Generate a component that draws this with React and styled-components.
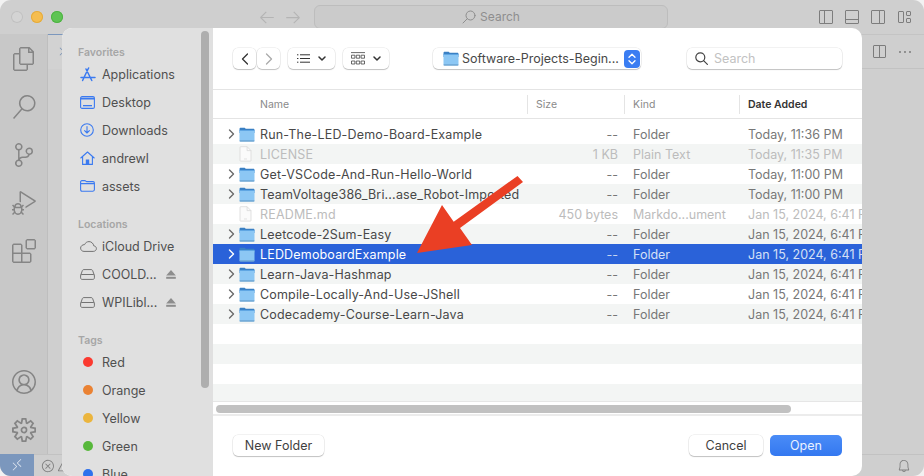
import React from "react";
import styled, { createGlobalStyle } from "styled-components";
import {
  VscFiles, VscSearch, VscSourceControl, VscDebugAlt, VscExtensions, VscAccount, VscSettingsGear,
  VscBell, VscRemote, VscError, VscWarning, VscSplitHorizontal, VscEllipsis, VscLayoutSidebarLeftOff,
  VscLayoutPanelOff, VscLayoutSidebarRightOff, VscLayout, VscArrowLeft, VscArrowRight, VscChevronRight,
} from "react-icons/vsc";

const Global = createGlobalStyle`
  html, body { margin: 0; padding: 0; background: #f2f2f2; overflow: hidden; }
  * { box-sizing: border-box; }
  body { font-family: Inter, "Liberation Sans", sans-serif; }
`;

const Page = styled.div`position: relative; width: 924px; height: 476px; overflow: hidden;`;
const Win = styled.div`
  width: 924px; height: 476px; border-radius: 11px; overflow: hidden; background: #cfcfcf;
  display: flex; flex-direction: column;
`;
const TitleBar = styled.div`height: 34px; display: flex; align-items: center; flex: none; padding-left: 11px; color: #a9a9a9;`;
const Light = styled.span`
  width: 12px; height: 12px; border-radius: 50%; margin-right: 8px; background: ${p => p.$c};
  box-shadow: inset 0 0 0 1px ${p => p.$b};
`;
const NavArrows = styled.div`display: flex; gap: 8px; margin-left: 187px; font-size: 18px; align-items: center; color: #b4b4b4;`;
const TitleSearch = styled.div`
  width: 354px; height: 24px; margin-left: 12px; margin-top: -1px; border: 1px solid #bdbdbd; border-radius: 6px; background: #cbcbcb;
  display: flex; align-items: center; justify-content: center; gap: 4px; color: #8e8e8e; font-size: 12px;
`;
const LayoutIcons = styled.div`display: flex; gap: 10px; margin-left: 150px; font-size: 16px; color: #7d7d7d; align-items: center;`;
const Body = styled.div`flex: 1; display: flex; min-height: 0;`;
const Activity = styled.div`
  width: 48px; background: #c8c8c8; border-right: 1px solid #bebebe; display: flex; flex-direction: column;
  align-items: center; padding-top: 1px; color: #858585; font-size: 24px;
`;
const ActivityItem = styled.div`height: 48px; width: 48px; display: flex; align-items: center; justify-content: center; flex: none;`;
const Spacer = styled.div`flex: 1;`;
const Editor = styled.div`flex: 1; display: flex; flex-direction: column;`;
const Tabs = styled.div`
  height: 35px; border-bottom: 1px solid #c2c2c2; border-top: 1px solid #c4c4c4; display: flex; align-items: center;
  gap: 10px; padding-right: 11px; color: #7c7c7c; font-size: 16px;
`;
const ActiveTab = styled.div`
  width: 20px; height: 35px; margin-top: -1px; margin-right: auto; border-top: 1px solid #7b97bd; background: #d2d2d2;
  display: flex; align-items: center; justify-content: flex-end; color: #7790b3; font-size: 13px;
`;
const Status = styled.div`height: 22px; flex: none; display: flex; align-items: center; border-top: 1px solid #c2c2c2; color: #808080; font-size: 14px;`;
const Remote = styled.div`width: 34px; height: 22px; margin-top: -1px; background: #7b97bd; color: #dfe6f0; display: flex; align-items: center; justify-content: center; font-size: 14px;`;
const StatusItems = styled.div`display: flex; gap: 2px; margin-left: 7px; flex: 1;`;
const BellWrap = styled.div`margin-right: 13px; display: flex;`;

const Dialog = styled.div`
  position: absolute; left: 62px; top: 28px; width: 800px; height: 448px; display: flex; background: #fff;
  border-radius: 10px; overflow: hidden;
`;
const Sidebar = styled.div`position: relative; width: 151px; flex: none; background: #e0e0e0; padding: 16px 0 0 16px; overflow: hidden;`;
const Scroll = styled.div`position: absolute; left: 139px; top: 3px; width: 8px; height: 357px; border-radius: 4px; background: #aeaeae;`;
const SideSection = styled.div`margin-bottom: 16px;`;
const SideTitle = styled.div`height: 16px; line-height: 18px; font-size: 10.5px; font-weight: 600; color: #a6a6a6;`;
const SideItem = styled.div`
  height: 28px; display: flex; align-items: center; font-size: 12.5px; color: #505050; white-space: nowrap;
`;
const SideIcon = styled.span`width: 24px; flex: none; display: flex; align-items: center; padding-left: 2px;`;
const Eject = styled.span`margin-left: 9px; display: flex;`;
const Dot = styled.span`width: 10px; height: 10px; border-radius: 50%; background: ${p => p.$c}; margin-left: 3px;`;

const Main = styled.div`flex: 1; min-width: 0; display: flex; flex-direction: column; overflow: hidden;`;
const Toolbar = styled.div`height: 62px; flex: none; display: flex; align-items: center; padding-left: 20px; border-bottom: 1px solid #e4e4e4;`;
const ToolBtn = styled.div`
  width: ${p => p.$w}px; height: 21px; margin-left: ${p => p.$ml || 0}px; border-radius: 5px; background: #fff; flex: none;
  box-shadow: 0 0 0 .5px rgba(0,0,0,.1), 0 1px 1px rgba(0,0,0,.2); display: flex; align-items: center; justify-content: center; gap: 8px;
  color: #333;
`;
const PathBtn = styled(ToolBtn)`justify-content: flex-start; padding: 0 1px 0 10px; gap: 3px; font-size: 12.5px; color: #484848; white-space: nowrap;`;
const Stepper = styled.span`margin-left: auto; width: 16px; height: 18px; border-radius: 4px; background: #3a7df2; display: flex; align-items: center; justify-content: center;`;
const SearchBox = styled(ToolBtn)`justify-content: flex-start; padding-left: 8px; gap: 6px; font-size: 12.5px; color: #c2c2c2;`;

const Header = styled.div`height: 29px; flex: none; border-bottom: 1px solid #e4e4e4; display: grid; grid-template-columns: 315px 97px 115px 122px; align-items: center; font-size: 10.5px; color: #8a8a8a;`;
const HeadCell = styled.div`
  height: 19px; line-height: 19px; padding-left: ${p => p.$first ? 47 : 8}px; border-right: ${p => p.$last ? "none" : "1px solid #e4e4e4"};
  font-weight: ${p => p.$active ? 600 : 400}; color: ${p => p.$active ? "#333" : "#8a8a8a"};
`;
const List = styled.div`flex: 1; min-height: 0; padding-top: 5px; overflow: hidden; border-bottom: 1px solid #e6e6e6;`;
const Row = styled.div`
  height: 20px; display: grid; grid-template-columns: 315px 97px 115px 140px; align-items: center; font-size: 12.5px; white-space: nowrap;
  background: ${p => p.$sel ? "#2a62d9" : p.$odd ? "#f3f5f4" : "#fff"};
  color: ${p => p.$sel ? "#fff" : p.$dim ? "#bcbcbc" : "#484848"};
`;
const NameCell = styled.div`display: flex; align-items: center; padding-left: 15px; letter-spacing: .17px;`;
const Chevron = styled.span`width: 11px; display: flex; flex: none;`;
const FileIc = styled.span`width: 21px; display: flex; flex: none;`;
const SizeCell = styled.div`text-align: right; padding-right: 7px; color: ${p => p.$sel ? "#c6d5f3" : p.$dim ? "#bcbcbc" : "#777"};`;
const MetaCell = styled.div`padding-left: 8px; color: ${p => p.$sel ? "#d5e0f6" : p.$dim ? "#bcbcbc" : "#777"};`;
const Track = styled.div`height: 14px; flex: none; padding: 3px 3px 0 3px; border-bottom: 2px solid #ececec;`;
const Thumb = styled.div`width: 575px; height: 8px; border-radius: 4px; background: #c1c1c1;`;
const Footer = styled.div`height: 60px; flex: none; display: flex; align-items: flex-start; padding: 19px 20px 0 20px; gap: 7px;`;
const FootBtn = styled.div`
  width: ${p => p.$w}px; height: 21px; margin-right: ${p => p.$push ? "auto" : 0}; border-radius: 5px; font-size: 12.5px; display: flex; align-items: center; justify-content: center;
  background: ${p => p.$primary ? "linear-gradient(#4a8cf7,#3478f0)" : "#fff"}; color: ${p => p.$primary ? "#e9f1ff" : "#3f3f3f"};
  box-shadow: ${p => p.$primary ? "none" : "0 0 0 .5px rgba(0,0,0,.1), 0 1px 1px rgba(0,0,0,.2)"};
`;
const Arrow = styled.svg`position: absolute; left: 0; top: 0; pointer-events: none;`;

const Folder = () => (
  <svg width="16" height="15" viewBox="0 0 16 15">
    <path d="M.5 2.2C.5 1.2 1 .8 1.9.8h3.4c.7 0 1 .7 1.6.9h7.3c.9 0 1.3.5 1.3 1.3v3H.5z" fill="#3a80c4" />
    <rect x=".5" y="3" width="15" height="11.5" rx="1.2" fill="#8cc7f4" />
    <path d="M.5 3.6c0-.4.3-.6.7-.6h13.6c.4 0 .7.2.7.6v.4H.5z" fill="#5fa6e3" />
    <rect x=".5" y="13.6" width="15" height=".9" rx=".4" fill="#5c93c2" />
  </svg>
);
const FileGlyph = () => (
  <svg width="13" height="16" viewBox="0 0 13 16" fill="#fbfbfb" stroke="#d9d9d9" strokeWidth=".8">
    <path d="M1 1.2c0-.3.2-.5.5-.5h6.6L12 4.6v10c0 .3-.2.5-.5.5h-10c-.3 0-.5-.2-.5-.5z" />
    <path d="M8.1.7v3.9H12" fill="none" />
    <path d="M5 13h3" strokeWidth=".7" />
  </svg>
);
const Chev = ({ color = "#6a6a6a" }) => (
  <svg width="7" height="10" viewBox="0 0 7 10" fill="none" stroke={color} strokeWidth="1.4" strokeLinecap="round" strokeLinejoin="round"><path d="M1.5 1l4 4-4 4" /></svg>
);
const B = "#3b7af0";
const AppIc = () => (<svg width="16" height="15" viewBox="0 0 16 15" fill="none" stroke={B} strokeWidth="1.5" strokeLinecap="round"><path d="M8.6 1 4 10.5 2.6 13.5M6 2l5.800 11.500M1 10.500h14" /></svg>);
const DeskIc = () => (<svg width="15" height="13" viewBox="0 0 15 13" fill="none" stroke={B} strokeWidth="1.1"><rect x=".6" y=".6" width="13.8" height="11.8" rx="1.5" /><path d="M1 2.2h13V3H1z" fill={B} /><rect x="3" y="9" width="9" height="1.3" fill={B} stroke="none" /></svg>);
const DownIc = () => (<svg width="14" height="14" viewBox="0 0 14 14" fill="none" stroke={B} strokeWidth="1.1" strokeLinecap="round" strokeLinejoin="round"><circle cx="7" cy="7" r="6.3" /><path d="M7 3.6v6.4M4.6 7.7 7 10l2.4-2.3" /></svg>);
const HomeIc = () => (<svg width="15" height="14" viewBox="0 0 15 14" fill="none" stroke={B} strokeWidth="1.1" strokeLinejoin="round" strokeLinecap="round"><path d="M.8 7 7.5 1l6.7 6M2.6 5.6v7.8h9.8V5.6" /><rect x="5.8" y="8.5" width="3.4" height="4.9" fill={B} stroke="none" /></svg>);
const OutFolder = () => (<svg width="15" height="12" viewBox="0 0 15 12" fill="none" stroke={B} strokeWidth="1.1"><path d="M.6 2c0-.8.5-1.4 1.3-1.4h3c.8 0 1 1 1.800 1H13c.9 0 1.400.5 1.400 1.300v6.700c0 1-.5 1.600-1.400 1.600H2c-.9 0-1.400-.6-1.400-1.600zM.6 3.600h13.800" /></svg>);
const Cloud = () => (<svg width="17" height="11" viewBox="0 0 17 11" fill="none" stroke="#737373" strokeWidth="1"><path d="M4 10.4h9.2c1.8 0 3.2-1.2 3.2-2.8 0-1.5-1.1-2.6-2.6-2.7C13.4 2.4 11.4.6 9 .6 7 .6 5.3 1.8 4.6 3.6 2.3 3.6.6 5.2.6 7.1c0 1.9 1.5 3.3 3.4 3.3z" /></svg>);
const Drive = () => (<svg width="15" height="11" viewBox="0 0 15 11" fill="none" stroke="#737373" strokeWidth="1"><path d="M.6 6.5 2.4 1.5C2.7.9 3.1.6 3.8.6h7.4c.7 0 1.1.3 1.4.9l1.8 5M.6 6.5v2.4c0 .9.6 1.500 1.500 1.500h10.800c.9 0 1.500-.6 1.500-1.500V6.500c0-.6-.5-1-1.100-1H1.700c-.6 0-1.100.4-1.100 1z" /></svg>);
const EjectIc = () => (<svg width="10" height="9" viewBox="0 0 10 9" fill="#8d8d8d"><path d="M5 0l4.800 5.500H.2z" /><rect x=".2" y="6.800" width="9.600" height="2" /></svg>);
const ListIc = () => (<svg width="13" height="9" viewBox="0 0 13 9" fill="none" stroke="#333" strokeWidth="1"><path d="M3 .8h10M3 4.500h10M3 8.200h10M0 .8h1.400M0 4.500h1.400M0 8.200h1.400" /></svg>);
const GridIc = () => (<svg width="14" height="14" viewBox="0 0 14 14" fill="none" stroke="#444" strokeWidth=".8"><path d="M0 .6h14" /><path d="M.5 3.200h3.400v3H.5zM5.300 3.200h3.400v3H5.300zM10.100 3.200h3.400v3h-3.400zM.5 9h3.400v3H.5zM5.300 9h3.400v3H5.300zM10.100 9h3.400v3h-3.400z" /></svg>);
const Caret = () => (<svg width="8" height="5" viewBox="0 0 8 5" fill="none" stroke="#333" strokeWidth="1.500" strokeLinecap="round" strokeLinejoin="round"><path d="M1 1l3 3 3-3" /></svg>);
const UpDown = () => (<svg width="8" height="12" viewBox="0 0 8 12" fill="none" stroke="#fff" strokeWidth="1.300" strokeLinecap="round" strokeLinejoin="round"><path d="M1 4.200 4 1.200l3 3M1 7.800l3 3 3-3" /></svg>);
const Loupe = () => (<svg width="13" height="13" viewBox="0 0 13 13" fill="none" stroke="#444" strokeWidth="1.200" strokeLinecap="round"><circle cx="5.300" cy="5.300" r="4.500" /><path d="M8.600 8.600l3.800 3.800" /></svg>);
const TitleLoupe = () => (<svg width="14" height="14" viewBox="0 0 14 14" fill="none" stroke="#8e8e8e" strokeWidth="1" strokeLinecap="round"><circle cx="8.500" cy="5.500" r="4.500" /><path d="M5.300 8.700 1 13" /></svg>);

const rows = [
  ["Run-The-LED-Demo-Board-Example", "--", "Folder", "Today, 11:36 PM"],
  ["LICENSE", "1 KB", "Plain Text", "Today, 11:35 PM", "file"],
  ["Get-VSCode-And-Run-Hello-World", "--", "Folder", "Today, 11:00 PM"],
  ["TeamVoltage386_Bri...ase_Robot-Imported", "--", "Folder", "Today, 11:00 PM"],
  ["README.md", "450 bytes", "Markdo...ument", "Jan 15, 2024, 6:41 PM", "file"],
  ["Leetcode-2Sum-Easy", "--", "Folder", "Jan 15, 2024, 6:41 PM"],
  ["LEDDemoboardExample", "--", "Folder", "Jan 15, 2024, 6:41 PM", "sel"],
  ["Learn-Java-Hashmap", "--", "Folder", "Jan 15, 2024, 6:41 PM"],
  ["Compile-Locally-And-Use-JShell", "--", "Folder", "Jan 15, 2024, 6:41 PM"],
  ["Codecademy-Course-Learn-Java", "--", "Folder", "Jan 15, 2024, 6:41 PM"],
  [], [], [], [],
];
const tags = [["Red", "#fb3a30"], ["Orange", "#ea8233"], ["Yellow", "#ebb53e"], ["Green", "#57b83b"], ["Blue", "#2f72ec"]];

export default function App() {
  return (
    <Page>
      <Global />
      <Win>
        <TitleBar>
          <Light $c="#d4d4d4" $b="#c0c0c0" /><Light $c="#f5bd4f" $b="#e3ab3e" /><Light $c="#5fc454" $b="#4fb344" />
          <NavArrows><VscArrowLeft /><VscArrowRight /></NavArrows>
          <TitleSearch><TitleLoupe />Search</TitleSearch>
          <LayoutIcons>
            <VscLayoutSidebarLeftOff /><VscLayoutPanelOff /><VscLayoutSidebarRightOff /><VscLayout />
          </LayoutIcons>
        </TitleBar>
        <Body>
          <Activity>
            <ActivityItem><VscFiles /></ActivityItem>
            <ActivityItem><VscSearch /></ActivityItem>
            <ActivityItem><VscSourceControl /></ActivityItem>
            <ActivityItem><VscDebugAlt /></ActivityItem>
            <ActivityItem><VscExtensions /></ActivityItem>
            <Spacer />
            <ActivityItem><VscAccount /></ActivityItem>
            <ActivityItem><VscSettingsGear /></ActivityItem>
          </Activity>
          <Editor>
            <Tabs><ActiveTab><VscChevronRight /></ActiveTab><VscSplitHorizontal /><VscEllipsis /></Tabs>
          </Editor>
        </Body>
        <Status>
          <Remote><VscRemote /></Remote>
          <StatusItems><VscError /><VscWarning /></StatusItems>
          <BellWrap><VscBell /></BellWrap>
        </Status>
      </Win>
      <Dialog>
        <Sidebar>
          <Scroll />
          <SideSection>
            <SideTitle>Favorites</SideTitle>
            <SideItem><SideIcon><AppIc /></SideIcon>Applications</SideItem>
            <SideItem><SideIcon><DeskIc /></SideIcon>Desktop</SideItem>
            <SideItem><SideIcon><DownIc /></SideIcon>Downloads</SideItem>
            <SideItem><SideIcon><HomeIc /></SideIcon>andrewl</SideItem>
            <SideItem><SideIcon><OutFolder /></SideIcon>assets</SideItem>
          </SideSection>
          <SideSection>
            <SideTitle>Locations</SideTitle>
            <SideItem><SideIcon><Cloud /></SideIcon>iCloud Drive</SideItem>
            <SideItem><SideIcon><Drive /></SideIcon>COOLD...<Eject><EjectIc /></Eject></SideItem>
            <SideItem><SideIcon><Drive /></SideIcon>WPILibl...<Eject><EjectIc /></Eject></SideItem>
          </SideSection>
          <SideSection>
            <SideTitle>Tags</SideTitle>
            {tags.map(([n, c]) => (
              <SideItem key={n}><SideIcon><Dot $c={c} /></SideIcon>{n}</SideItem>
            ))}
          </SideSection>
        </Sidebar>
        <Main>
          <Toolbar>
            <ToolBtn $w={23}><svg width="8" height="12" viewBox="0 0 8 12" fill="none" stroke="#333" strokeWidth="1.3" strokeLinecap="round" strokeLinejoin="round"><path d="M6.5 1 1.5 6l5 5" /></svg></ToolBtn>
            <ToolBtn $w={23} $ml={1}><svg width="8" height="12" viewBox="0 0 8 12" fill="none" stroke="#aaa" strokeWidth="1.3" strokeLinecap="round" strokeLinejoin="round"><path d="M1.5 1l5 5-5 5" /></svg></ToolBtn>
            <ToolBtn $w={47} $ml={8}><ListIc /><Caret /></ToolBtn>
            <ToolBtn $w={46} $ml={8}><GridIc /><Caret /></ToolBtn>
            <PathBtn $w={208} $ml={44}><Folder />Software-Projects-Begin...<Stepper><UpDown /></Stepper></PathBtn>
            <SearchBox $w={155} $ml={46}><Loupe />Search</SearchBox>
          </Toolbar>
          <Header>
            <HeadCell $first>Name</HeadCell>
            <HeadCell>Size</HeadCell>
            <HeadCell>Kind</HeadCell>
            <HeadCell $active $last>Date Added</HeadCell>
          </Header>
          <List>
            {rows.map((r, i) => {
              const dim = r[4] === "file";
              const sel = r[4] === "sel";
              return (
                <Row key={i} $odd={i % 2 === 1} $dim={dim} $sel={sel}>
                  {r[0] && (
                    <>
                      <NameCell>
                        <Chevron>{!dim && <Chev color={sel ? "#fff" : "#6a6a6a"} />}</Chevron>
                        <FileIc>{dim ? <FileGlyph /> : <Folder />}</FileIc>
                        {r[0]}
                      </NameCell>
                      <SizeCell $dim={dim} $sel={sel}>{r[1]}</SizeCell>
                      <MetaCell $dim={dim} $sel={sel}>{r[2]}</MetaCell>
                      <MetaCell $dim={dim} $sel={sel}>{r[3]}</MetaCell>
                    </>
                  )}
                </Row>
              );
            })}
          </List>
          <Track><Thumb /></Track>
          <Footer>
            <FootBtn $w={91} $push>New Folder</FootBtn>
            <FootBtn $w={74}>Cancel</FootBtn>
            <FootBtn $w={72} $primary>Open</FootBtn>
          </Footer>
        </Main>
      </Dialog>
      <Arrow width="924" height="476" viewBox="0 0 924 476">
        <path d="M517.5 176 523 182 460 228 472 245 417 253 442 205 453.7 221.7Z" fill="#ea3f24" />
      </Arrow>
    </Page>
  );
}
